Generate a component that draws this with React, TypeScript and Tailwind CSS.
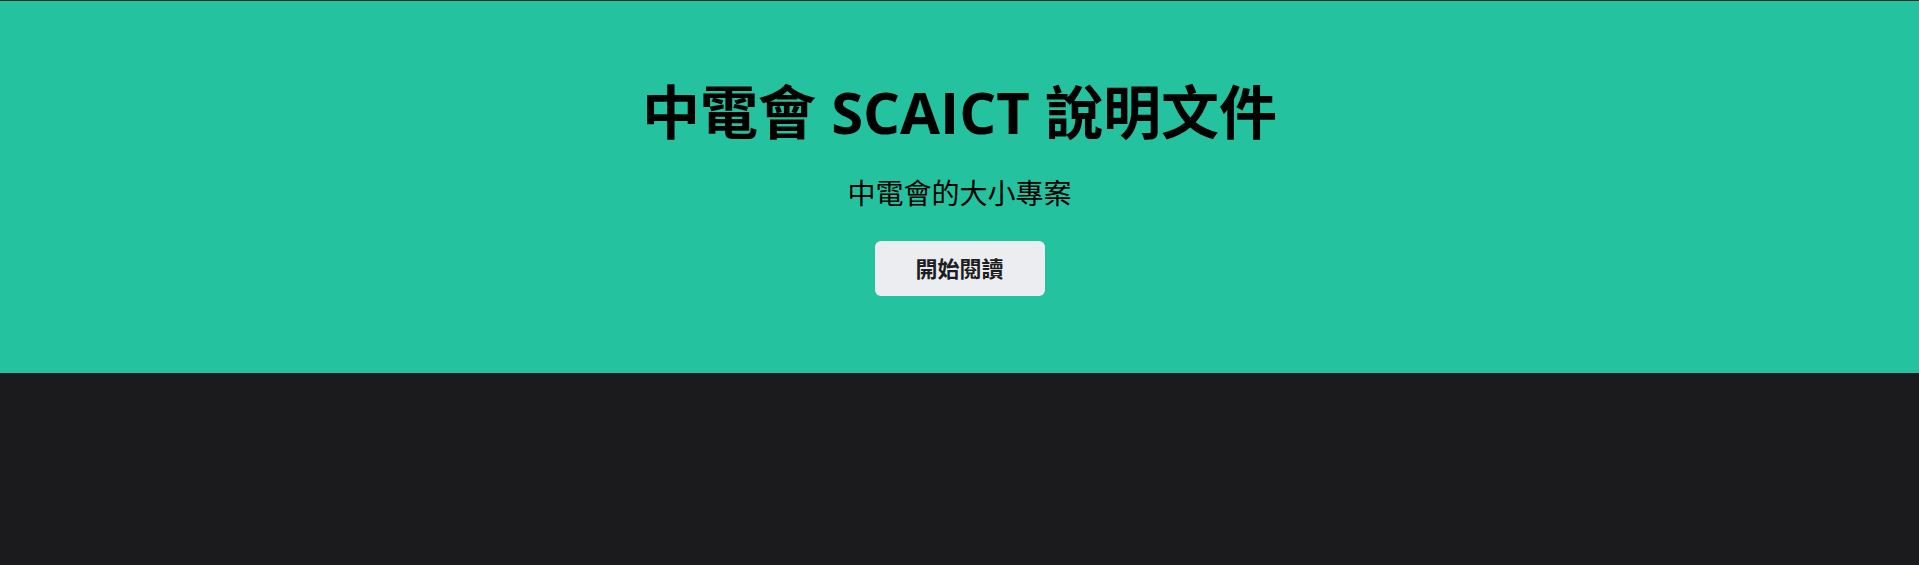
import React from "react";

const font = {
  fontFamily: '"Open Sans", "Noto Sans CJK TC", sans-serif',
};

export default function App() {
  return (
    <div className="min-h-[565px] w-full bg-[#1b1b1d]" style={font}>
      <div className="h-px bg-[#303030]" />
      {/* hero banner */}
      <header className="flex h-[372px] flex-col items-center bg-[#25c2a0] pt-[75px] text-center">
        <h1 className="text-[58px] font-bold leading-[72px] text-black">
          中電會 SCAICT 說明文件
        </h1>
        <p className="mt-[24px] text-[28px] leading-[42px] text-black">
          中電會的大小專案
        </p>
        <div className="mt-[27px]">
          <a
            href="#"
            className="flex h-[55px] w-[170px] items-center justify-center rounded-md bg-[#ebedf0] text-[22px] font-bold text-[#1c1e21]"
          >
            開始閱讀
          </a>
        </div>
      </header>
    </div>
  );
}
